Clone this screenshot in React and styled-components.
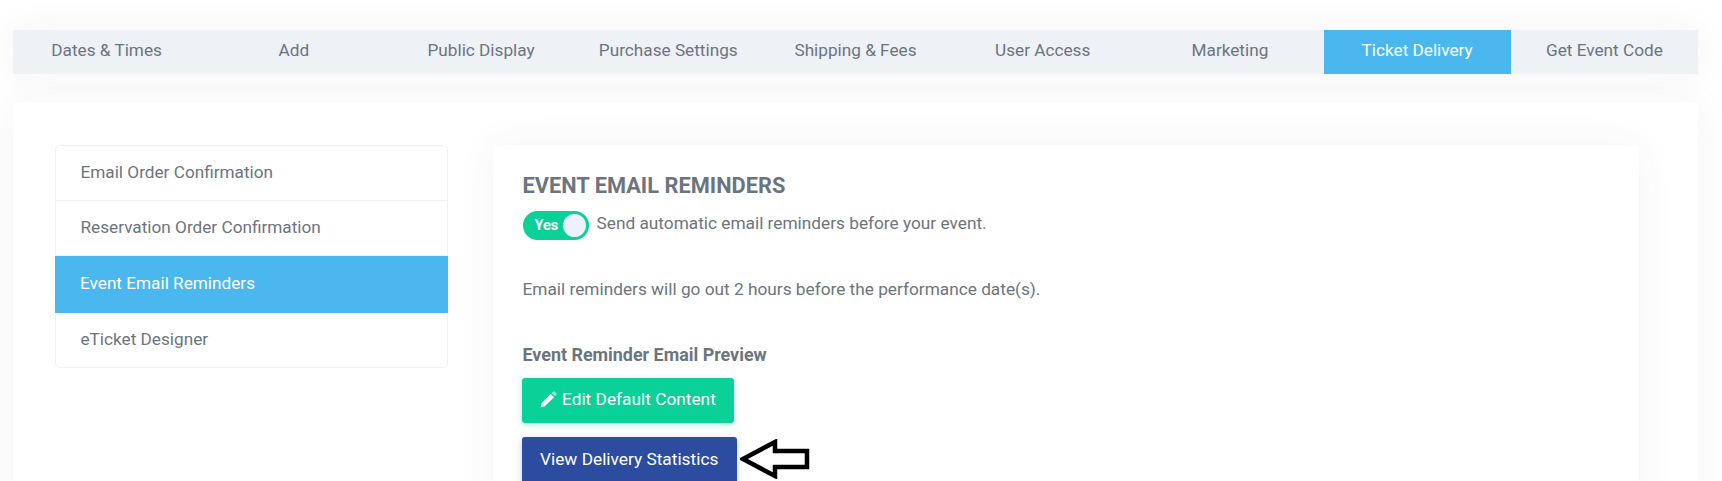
import React from "react";
import styled, { createGlobalStyle } from "styled-components";

const Global = createGlobalStyle`
  html, body { margin: 0; padding: 0; background: #fff; height: 481px; overflow: hidden; }
  body { font-family: Roboto, "Liberation Sans", sans-serif; color: #6c757d; }
`;

const Page = styled.div`
  width: 1722px;
  height: 481px;
  overflow: hidden;
  box-sizing: border-box;
  padding: 30px 24px 0 13px;
  background: #fff;
`;

const TabBar = styled.nav`
  display: grid;
  grid-template-columns: repeat(9, 1fr);
  height: 44px;
  background: #eef1f6;
  box-shadow: 0 0 40px rgba(50, 60, 70, 0.05);
`;

const Tab = styled.div`
  display: flex;
  align-items: center;
  justify-content: center;
  padding-bottom: 4px;
  box-sizing: border-box;
  font-size: 17.2px;
  color: ${(p) => (p.$active ? "#fff" : "#6c757d")};
  background: ${(p) => (p.$active ? "#4ab7ee" : "transparent")};
`;

const Panel = styled.main`
  margin-top: 28px;
  height: 420px;
  padding: 43px 59px 0 42px;
  background: #fff;
  border-radius: 4px;
  box-shadow: 0 0 40px rgba(50, 60, 70, 0.05);
  display: flex;
  gap: 45px;
  align-items: flex-start;
`;

const SideMenu = styled.ul`
  list-style: none;
  margin: 0;
  padding: 0;
  width: 393px;
  box-sizing: border-box;
  border: 1px solid #eef1f6;
  border-radius: 5px;
  flex: none;
`;

const SideItem = styled.li`
  height: ${(p) => (p.$active ? "57px" : "55px")};
  box-sizing: border-box;
  display: flex;
  align-items: center;
  padding: 0 ${(p) => (p.$active ? "25px" : "24.5px")} 2px;
  font-size: 17.2px;
  margin: ${(p) => (p.$active ? "0 -1px" : "0")};
  color: ${(p) => (p.$active ? "#fff" : "#6c757d")};
  background: ${(p) => (p.$active ? "#4ab7ee" : "transparent")};
  border-bottom: 1px solid ${(p) => (p.$plain ? "transparent" : "#eef1f6")};
  &:last-child {
    height: 54px;
  }
`;

const Card = styled.section`
  flex: 1;
  height: 400px;
  padding: 28px 30px 0 29.5px;
  background: #fff;
  border-radius: 4px;
  box-shadow: 0 0 40px rgba(50, 60, 70, 0.06);
`;

const Heading = styled.h2`
  margin: 0;
  font-size: 21.8px;
  line-height: 26px;
  font-weight: 700;
  color: #6c757d;
`;

const ToggleRow = styled.div`
  display: flex;
  align-items: flex-start;
  gap: 8px;
  margin-top: 12px;
  font-size: 17.25px;
  line-height: 24px;
`;

const Toggle = styled.span`
  width: 66px;
  height: 29px;
  border-radius: 15px;
  background: #0ad197;
  position: relative;
  flex: none;
  color: #fff;
  font-size: 14.5px;
  font-weight: 700;
  line-height: 29px;
  padding-left: 12px;
  box-sizing: border-box;
`;

const Knob = styled.span`
  position: absolute;
  right: 3px;
  top: 3px;
  width: 23px;
  height: 23px;
  border-radius: 50%;
  background: #edf1fb;
`;

const Paragraph = styled.p`
  margin: 37px 0 0;
  font-size: 17.25px;
  line-height: 24px;
`;

const Label = styled.div`
  margin-top: 42px;
  font-size: 17.9px;
  line-height: 24px;
  font-weight: 700;
`;

const Button = styled.button`
  display: flex;
  align-items: center;
  gap: 5px;
  flex: none;
  border: 0;
  border-radius: 3px;
  height: ${(p) => p.$height}px;
  padding: 0 18.5px 3px;
  margin-left: -1px;
  font: 400 17.3px Roboto, sans-serif;
  color: #fff;
  background: ${(p) => p.$bg};
  box-shadow: 0 2px 6px ${(p) => p.$shadow};
  margin-top: ${(p) => p.$top}px;
`;

const ArrowRow = styled.div`
  display: flex;
  align-items: flex-start;
  gap: 3px;
  margin-top: 14px;
`;

const ArrowMark = styled.svg`
  flex: none;
  margin-top: 2px;
`;

const Pencil = () => (
  <svg width="17" height="17" viewBox="0 0 16 16" aria-hidden="true">
    <path d="M4.6 14.4 0.4 15.6 1.6 11.4 10.2 2.8 13.2 5.8Z" fill="#fff" />
    <path d="M11 2 12.3 0.7a1.3 1.3 0 0 1 1.8 0l1.2 1.2a1.3 1.3 0 0 1 0 1.8L14 5Z" fill="#fff" fillOpacity="0.55" />
  </svg>
);

const Arrow = () => (
  <ArrowMark width="70" height="40" viewBox="0 0 70 40" aria-hidden="true">
    <path d="M3 20 35 3 V12 H67 V28 H35 V37 Z" fill="#fff" stroke="#000" strokeWidth="4.5" strokeLinejoin="miter" />
  </ArrowMark>
);

const tabs = ["Dates & Times", "Add", "Public Display", "Purchase Settings", "Shipping & Fees", "User Access", "Marketing", "Ticket Delivery", "Get Event Code"];
const items = ["Email Order Confirmation", "Reservation Order Confirmation", "Event Email Reminders", "eTicket Designer"];

export default function App() {
  return (
    <Page>
      <Global />
      <TabBar>
        {tabs.map((t) => (
          <Tab key={t} $active={t === "Ticket Delivery"}>{t}</Tab>
        ))}
      </TabBar>
      <Panel>
        <SideMenu>
          {items.map((t, i) => (
            <SideItem key={t} $active={i === 2} $plain={i >= 2}>{t}</SideItem>
          ))}
        </SideMenu>
        <Card>
          <Heading>EVENT EMAIL REMINDERS</Heading>
          <ToggleRow>
            <Toggle>Yes<Knob /></Toggle>
            Send automatic email reminders before your event.
          </ToggleRow>
          <Paragraph>Email reminders will go out 2 hours before the performance date(s).</Paragraph>
          <Label>Event Reminder Email Preview</Label>
          <Button $height={45} $bg="#0ad197" $shadow="rgba(10,209,151,.3)" $top={11}><Pencil />Edit Default Content</Button>
          <ArrowRow>
            <Button $height={47} $bg="#2c4ca0" $shadow="rgba(44,76,160,.3)" $top={0}>View Delivery Statistics</Button>
            <Arrow />
          </ArrowRow>
        </Card>
      </Panel>
    </Page>
  );
}
